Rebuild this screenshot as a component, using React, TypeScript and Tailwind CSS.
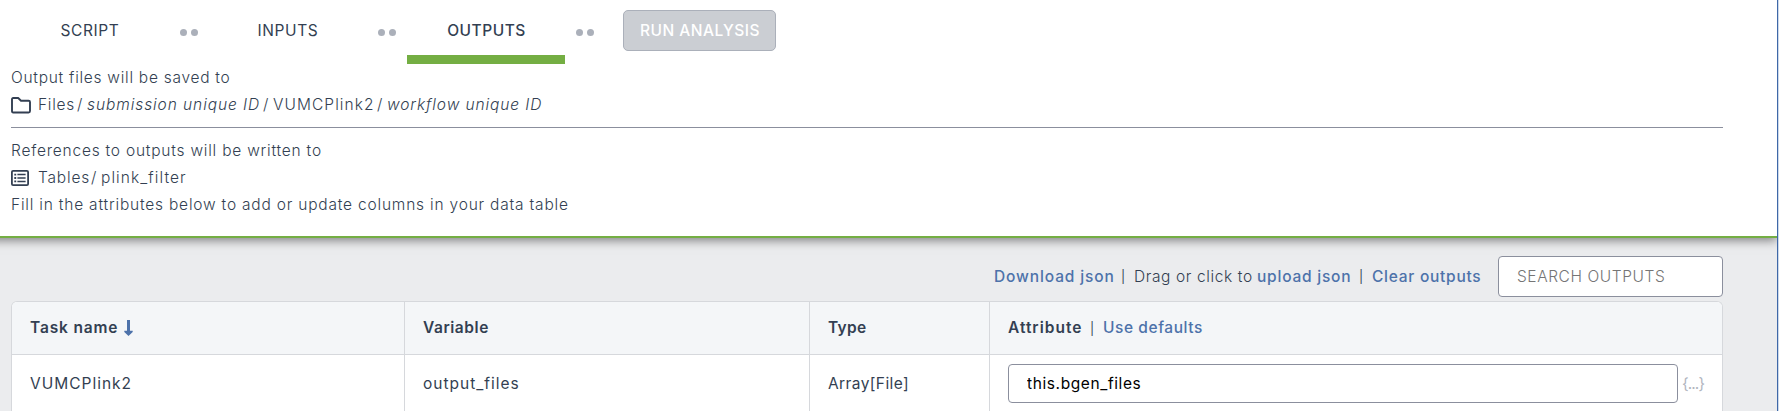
import React from "react";

const Dots = () => (
  <div className="flex w-10 shrink-0 items-center justify-center gap-1 pr-px">
    <span className="size-[7px] rounded-full bg-[#abb0ba]" />
    <span className="size-[7px] rounded-full bg-[#abb0ba]" />
  </div>
);

const Tab = ({ label, text, active = false }: { label: string; text: string; active?: boolean }) => (
  <button
    className={`flex h-16 w-[158px] shrink-0 items-center justify-center border-b-[9px] pt-[6px] ${
      active ? "border-[#74ae43] font-medium" : "border-transparent font-normal"
    }`}
  >
    <span className={text}>{label}</span>
  </button>
);

const Bar = ({ width }: { width: string }) => (
  <span className={`${width} pt-0.5 pl-px text-[12.5px] font-normal`}>|</span>
);

const FolderIcon = () => (
  <svg className="mt-px h-[17px] w-5 shrink-0" viewBox="0 0 20 17" fill="none" stroke="#333f52" strokeWidth="1.9" strokeLinejoin="round">
    <path d="M1 2.2Q1 1 2.2 1H7.2L10 3.7H17.6Q19 3.7 19 5V14Q19 15.5 17.6 15.5H2.2Q1 15.5 1 14Z" />
  </svg>
);

const ListIcon = () => (
  <svg className="h-4 w-[18px] shrink-0" viewBox="0 0 18 16" fill="none" stroke="#333f52">
    <rect x="0.9" y="0.9" width="16.2" height="14.2" rx="1.2" strokeWidth="1.8" />
    <path d="M6.4 4.6H14.6M6.4 8H14.6M6.4 11.4H14.6" strokeWidth="1.5" />
    <path d="M3.3 4.6H5.2M3.3 8H5.2M3.3 11.4H5.2" strokeWidth="1.8" />
  </svg>
);

const SortArrow = () => (
  <svg className="ml-[6px] h-4 w-[9px]" viewBox="0 0 9 16" fill="#4d72aa">
    <path d="M3 0H6V10.8H8.7V12L4.5 16L0.3 12V10.8H3Z" />
  </svg>
);

export default function App() {
  return (
    <div className="flex h-[411px] w-[1779px] overflow-hidden bg-[#ebecee] font-[Inter,'Liberation_Sans',sans-serif] text-[15.5px] whitespace-nowrap text-[#333f52]">
      <div className="flex w-[1777px] shrink-0 flex-col overflow-hidden">
        <header className="relative -ml-5 h-[238px] shrink-0 border-b-2 border-[#74ae43] bg-white pl-[31px] shadow-[0_2px_10px_rgba(0,0,0,0.5)]">
          <nav className="flex h-16">
            <Tab label="SCRIPT" text="tracking-[0.6px]" />
            <Dots />
            <Tab label="INPUTS" text="tracking-[0.6px]" />
            <Dots />
            <Tab label="OUTPUTS" text="tracking-[0.5px] pl-px" active />
            <Dots />
            <button className="mt-[10px] ml-[18px] flex h-[41px] w-[153px] items-center justify-center rounded-[5px] border border-[#abb0ba] bg-[#cbced3] pl-px font-medium tracking-[0.5px] text-white">
              RUN ANALYSIS
            </button>
          </nav>
          <section className="w-[1712px] border-b border-[#8b8f9d] pb-[9px] leading-[27px] font-light">
            <div className="tracking-[0.73px]">Output files will be saved to</div>
            <div className="flex items-center">
              <FolderIcon />
              <span className="ml-[7px] w-[39px] tracking-[0.7px]">Files</span>
              <span className="w-[10px]">/</span>
              <span className="w-[176px] tracking-[0.92px] italic">submission unique ID</span>
              <span className="w-[10px]">/</span>
              <span className="w-[104px] tracking-[1.07px]">VUMCPlink2</span>
              <span className="w-[10px]">/</span>
              <span className="tracking-[0.9px] italic">workflow unique ID</span>
            </div>
          </section>
          <section className="pt-[9px] leading-[27px] font-light">
            <div className="tracking-[0.78px]">References to outputs will be written to</div>
            <div className="flex items-center">
              <ListIcon />
              <span className="ml-[9px] w-[53px] tracking-[0.8px]">Tables</span>
              <span className="w-[10px]">/</span>
              <span className="tracking-[1.08px]">plink_filter</span>
            </div>
            <div className="tracking-[0.8px]">Fill in the attributes below to add or update columns in your data table</div>
          </section>
        </header>

        <main className="flex flex-col pl-[11px]">
          <div className="mt-[18px] flex h-[41px] items-center pl-[983px]">
            <a className="w-[126px] font-[450] tracking-[0.88px] text-[#4d72aa]">Download json</a>
            <Bar width="w-[14px]" />
            <span className="w-[123px] font-light tracking-[0.62px]">Drag or click to</span>
            <a className="w-[101px] font-[450] tracking-[0.78px] text-[#4d72aa]">upload json</a>
            <Bar width="w-[14px]" />
            <a className="w-[126px] font-[450] tracking-[0.74px] text-[#4d72aa]">Clear outputs</a>
            <input
              className="h-[41px] w-[225px] shrink-0 rounded-[4px] border border-[#8b8f9d] bg-white pl-[18px] font-light tracking-[0.58px] placeholder:text-[#757575]"
              placeholder="SEARCH OUTPUTS"
            />
          </div>

          <div className="mt-1 grid w-[1712px] grid-cols-[393px_405px_180px_1fr] overflow-hidden rounded-t-[6px] border border-b-0 border-[#d6d8dc] bg-white">
            <div className="flex h-[53px] items-center border-r border-b border-[#d6d8dc] bg-[#f4f6f8] pl-[18px] font-semibold">
              <span className="tracking-[0.83px]">Task name</span>
              <SortArrow />
            </div>
            <div className="flex items-center border-r border-b border-[#d6d8dc] bg-[#f4f6f8] pl-[18px] font-semibold tracking-[0.55px]">Variable</div>
            <div className="flex items-center border-r border-b border-[#d6d8dc] bg-[#f4f6f8] pl-[18px] font-semibold tracking-[0.31px]">Type</div>
            <div className="flex items-center border-b border-[#d6d8dc] bg-[#f4f6f8] pl-[18px]">
              <span className="w-[81px] font-semibold tracking-[1px]">Attribute</span>
              <Bar width="w-[14px]" />
              <a className="font-[450] tracking-[0.57px] text-[#4d72aa]">Use defaults</a>
            </div>

            <div className="flex h-[57px] items-center border-r border-[#d6d8dc] pl-[18px] tracking-[1px]">VUMCPlink2</div>
            <div className="flex items-center border-r border-[#d6d8dc] pl-[18px] tracking-[1px]">output_files</div>
            <div className="flex items-center border-r border-[#d6d8dc] pl-[18px] tracking-[0.4px]">Array[File]</div>
            <div className="flex items-center pl-[18px]">
              <input
                className="h-[39px] w-[670px] rounded-[4px] border border-[#8b8f9d] bg-white pl-[18px] tracking-[0.6px] text-black"
                defaultValue="this.bgen_files"
              />
              <span className="ml-1 tracking-[-0.9px] text-[#b1b5be]">{"{...}"}</span>
            </div>
          </div>
        </main>
      </div>
      <div className="w-0.5 shrink-0 border-r border-[#ccd9ea] bg-[#3f68a8]" />
    </div>
  );
}
